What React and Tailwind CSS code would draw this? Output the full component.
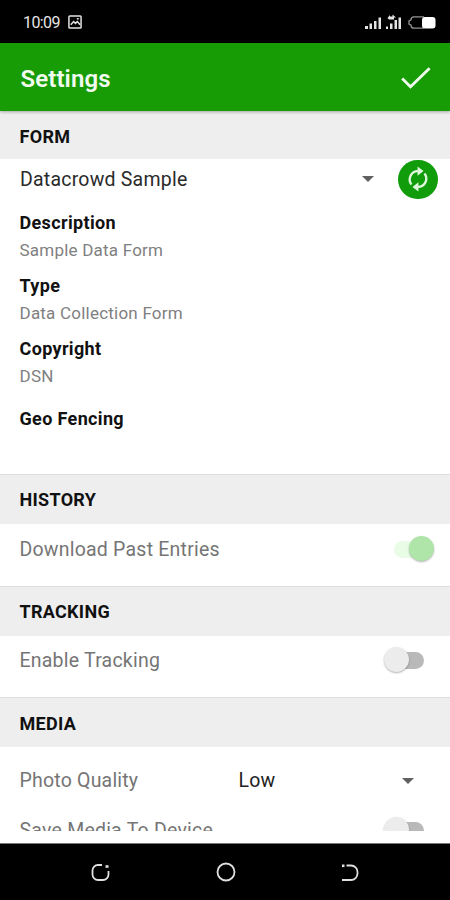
import React, { useState } from 'react';

const FIELDS = [
    { label: 'Description', value: 'Sample Data Form' },
    { label: 'Type', value: 'Data Collection Form' },
    { label: 'Copyright', value: 'DSN' },
];

const StatusBar = () => (
    <div className="flex h-[43px] shrink-0 items-center bg-black pl-[23px] pr-[14px] pt-px text-[#e4e4e4]">
        <span className="pt-px text-[16px] tracking-[-0.6px]">10:09</span>
        <svg className="ml-[8px]" width="14" height="14" viewBox="0 0 15 15" fill="none" stroke="currentColor" strokeWidth="1.6">
            <rect x="1" y="1" width="13" height="13" rx="1" />
            <path d="M3 10.5l3-3.5 2 2 2-2 3 3.5" />
            <path d="M9.5 4h2" />
        </svg>
        <svg className="ml-auto" width="72" height="18" viewBox="0 0 72 18" fill="currentColor">
            <path d="M1 13h3v3H1zM5.500 10.500H8V16H5.500zM10 8h2.500v8H10zM14.500 4.500H17V16h-2.500z" />
            <path d="M22 13.500h2V16h-2zM26 10.500h2.500V16H26zM30.500 7h2.500v9h-2.500zM34.500 4.500H37V16h-2.500z" />
            <path d="M23.500 5l2.500-3v1.500h2.500V1.500L32 4.500h-2v2h-5z" />
            <path d="M60 3.800H50a3 3 0 0 0-3 3l-2 1v3.400l2 1a3 3 0 0 0 3 3H60" fill="none" stroke="currentColor" strokeOpacity="0.65" strokeWidth="1.300" />
            <rect x="58" y="4" width="13.500" height="11.500" rx="3" fill="white" />
        </svg>
    </div>
);

const AppBar = () => (
    <header className="z-10 flex h-[68px] shrink-0 items-center justify-between bg-[#189c06] pl-[20.5px] pr-[19px] pt-[2px] shadow-[0_1px_3px_rgba(0,0,0,0.3)]">
        <h1 className="pt-px text-[24px] font-semibold tracking-[0.1px] text-[#f2fbf0]">Settings</h1>
        <button aria-label="Save">
            <svg width="30" height="22" viewBox="0 0 30 22" fill="none" stroke="#effbed" strokeWidth="2.800">
                <path d="M1.200 11.500l8.300 8.300L28.600 1.200" />
            </svg>
        </button>
    </header>
);

const SectionHeader = ({ title, className = '' }) => (
    <h2 className={`flex shrink-0 items-center bg-[#eee] pl-[19.5px] text-[18px] font-bold tracking-[0.300px] text-[#111] ${className}`}>{title}</h2>
);

const Caret = ({ className = '' }) => (
    <svg className={className} width="12" height="6" viewBox="0 0 12 6" fill="#606060">
        <path d="M0 0h12L6 6z" />
    </svg>
);

const Toggle = ({ checked, disabled, label, onChange }) => (
    <button
        role="switch"
        aria-checked={checked}
        aria-label={label}
        disabled={disabled}
        onClick={() => onChange?.(!checked)}
        className={`relative h-[17px] w-[30px] rounded-full ${checked ? 'bg-[#e9fce6]' : 'bg-[#b9b9b9]'}`}
    >
        <span
            className={`absolute -top-[5px] size-[25px] rounded-full shadow-[0_1px_2px_rgba(0,0,0,0.3)] ${checked ? 'left-[15px] bg-[#afe5a8]' : '-left-[10px] bg-[#ececec]'}`}
        />
    </button>
);

const SwitchRow = ({ title, className = '', ...toggle }) => (
    <div className={`flex shrink-0 items-center justify-between pl-[19.5px] pr-[26px] ${className}`}>
        <span className="pt-px text-[19.5px] tracking-[0.220px] text-[#757575]">{title}</span>
        <Toggle label={title} {...toggle} />
    </div>
);

const NavBar = () => (
    <nav className="flex h-[57px] shrink-0 items-center justify-between border-t border-[#777] bg-black pl-[91px] pr-[91px] text-[#e0e0e0]">
        <svg width="19" height="19" viewBox="0 0 19 19" fill="none" stroke="currentColor" strokeWidth="1.800">
            <path d="M11 2H7a5.500 5.500 0 0 0-5.500 5.500v4A5.500 5.500 0 0 0 7 17h5a5.500 5.500 0 0 0 5.500-5.500V8" />
            <path d="M14.500 3.500h3" strokeWidth="2.600" />
        </svg>
        <svg width="20" height="20" viewBox="0 0 20 20" fill="none" stroke="currentColor" strokeWidth="1.800">
            <circle cx="10" cy="10" r="8.500" />
        </svg>
        <svg width="18" height="19" viewBox="0 0 18 19" fill="none" stroke="currentColor" strokeWidth="1.800">
            <path d="M5.500 2.500H10a6.500 6.500 0 0 1 6.500 6.500v1.500A6.500 6.500 0 0 1 10 17H1" />
            <path d="M1 2.800h2.500" strokeWidth="2.600" />
        </svg>
    </nav>
);

const App = () => {
    const [tracking, setTracking] = useState(false);
    const [saveMedia, setSaveMedia] = useState(false);

    return (
        <div className="flex h-[900px] w-[450px] flex-col overflow-hidden bg-white font-['Roboto',sans-serif]">
            <StatusBar />
            <AppBar />

            <main className="flex h-[720px] shrink-0 flex-col overflow-hidden">
                <SectionHeader title="FORM" className="h-[48px] pt-[2px]" />
                <section className="h-[315px] shrink-0">
                    <div className="flex h-[40px] items-center pl-[20px] pr-[12px]">
                        <span className="pt-px text-[19.5px] tracking-[0.220px] text-[#2a2a2a]">Datacrowd Sample</span>
                        <Caret className="ml-auto mr-[24px]" />
                        <button aria-label="Refresh form" className="flex h-[39px] w-[40px] items-center justify-center rounded-full bg-[#109c0b]">
                            <svg width="24" height="26" viewBox="0 0 24 28" fill="none" stroke="#dff7dc" strokeWidth="2.500">
                                <path d="M5 20A9 9 0 0 1 11 5.500h2" />
                                <path d="M19 8A9 9 0 0 1 13 22.500h-2" />
                                <path d="M11.500 .5l6.500 5-6.500 5z" fill="#dff7dc" stroke="none" />
                                <path d="M12.500 17.500l-6.500 5 6.500 5z" fill="#dff7dc" stroke="none" />
                            </svg>
                        </button>
                    </div>
                    <dl className="mt-[10px] pl-[19.5px]">
                        {FIELDS.map((field) => (
                            <div key={field.label} className="mb-[8px]">
                                <dt className="text-[18px] leading-[27px] font-bold tracking-[0.350px] text-[#111]">{field.label}</dt>
                                <dd className="pt-px text-[17px] leading-[27px] tracking-[0.220px] text-[#808080]">{field.value}</dd>
                            </div>
                        ))}
                        <dt className="pt-[7px] text-[18px] leading-[27px] font-bold tracking-[0.350px] text-[#111]">Geo Fencing</dt>
                    </dl>
                </section>

                <SectionHeader title="HISTORY" className="h-[50px] border-t border-[#dedede]" />
                <SwitchRow title="Download Past Entries" checked disabled className="mb-[12px] h-[50px]" />

                <SectionHeader title="TRACKING" className="h-[50px] border-t border-[#dedede]" />
                <SwitchRow title="Enable Tracking" checked={tracking} onChange={setTracking} className="mb-[12px] h-[49px]" />

                <SectionHeader title="MEDIA" className="h-[50px] border-t border-[#dedede] pt-px" />
                <div className="flex h-[67px] shrink-0 items-center pl-[19.5px] pr-[36px]">
                    <span className="w-[219px] pt-px text-[19.5px] tracking-[0.200px] text-[#757575]">Photo Quality</span>
                    <span className="pt-px text-[19.5px] tracking-[0.200px] text-[#222]">Low</span>
                    <Caret className="ml-auto" />
                </div>
                <SwitchRow title="Save Media To Device" checked={saveMedia} onChange={setSaveMedia} className="h-[32px]" />
            </main>

            <div className="h-[12px] shrink-0" />
            <NavBar />
        </div>
    );
};

export default App;
